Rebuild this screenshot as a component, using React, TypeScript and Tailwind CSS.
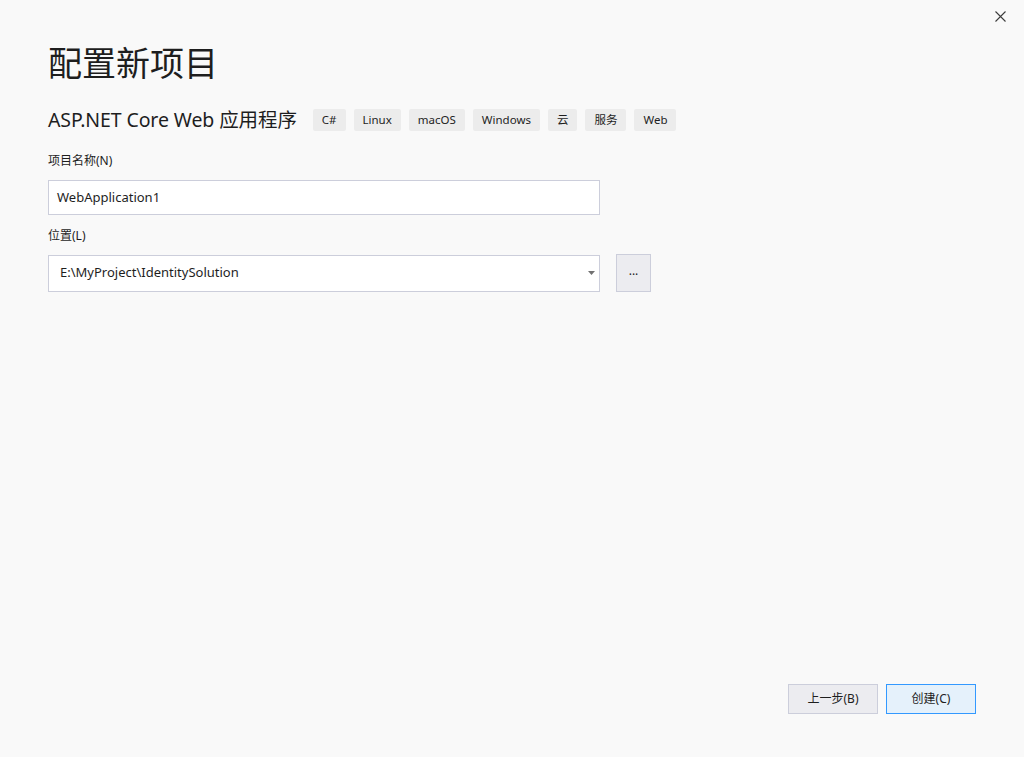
import React from 'react';

const tags = ['C#', 'Linux', 'macOS', 'Windows', '云', '服务', 'Web'];

const font = 'font-["Noto_Sans","Noto_Sans_CJK_SC",sans-serif]';

const App = () => {
  return (
    <div className={`relative flex h-[757px] w-[1024px] flex-col bg-[#f9f9f9] text-[#1e1e1e] ${font}`}>
      {/* Close button */}
      <button type="button" className="absolute right-[16px] top-[8px] flex h-[16px] w-[16px] items-center justify-center text-[#3c3c3c]">
        <svg width="11" height="11" viewBox="0 0 11 11" fill="none" stroke="currentColor" strokeWidth="1.1">
          <path d="M0.5 0.5 L10.5 10.5 M10.5 0.5 L0.5 10.5" />
        </svg>
      </button>

      <div className="flex flex-1 flex-col pl-[48px] pr-[48px] pt-[41px]">
        <h1 className="text-[34px] font-normal leading-[44px] text-[#1e1e1e]">配置新项目</h1>

        {/* Template + tags */}
        <div className="mt-[21px] flex h-[28px] items-center">
          <span className="text-[19.5px] leading-[28px] tracking-[-0.1px] text-[#1e1e1e]">ASP.NET Core Web 应用程序</span>
          <div className="ml-[16px] flex items-center gap-[8px]">
            {tags.map((tag) => (
              <span key={tag} className="flex h-[22px] items-center rounded-[2px] bg-[#ececec] px-[9px] text-[11.5px] text-[#1e1e1e]">
                {tag}
              </span>
            ))}
          </div>
        </div>

        {/* Project name */}
        <label className="mt-[18px] block text-[12px] leading-[18px] text-[#1e1e1e]">项目名称(N)</label>
        <div className="mt-[10px] flex h-[35px] w-[552px] items-center border border-[#cccedb] bg-white px-[8px] text-[13px] text-[#1e1e1e]">
          WebApplication1
        </div>

        {/* Location */}
        <label className="mt-[12px] block text-[12px] leading-[18px] text-[#1e1e1e]">位置(L)</label>
        <div className="mt-[9px] flex items-center gap-[16px]">
          <div className="flex h-[37px] w-[552px] items-center justify-between border border-[#cccedb] bg-white pl-[11px] pr-[3px] text-[13px] text-[#1e1e1e]">
            <span>E:\MyProject\IdentitySolution</span>
            <svg width="7" height="4" viewBox="0 0 7 4" className="mr-[1px] text-[#717171]">
              <path d="M0 0 L7 0 L3.5 4 Z" fill="currentColor" />
            </svg>
          </div>
          <button type="button" className="flex h-[38px] w-[35px] items-center justify-center border border-[#cccedb] bg-[#ececf0] pb-[4px] text-[12px] text-[#1e1e1e]">
            ...
          </button>
        </div>

        {/* Footer */}
        <div className="mb-[43px] mt-auto flex justify-end gap-[8px]">
          <button type="button" className="flex h-[30px] w-[90px] items-center justify-center border border-[#cccedb] bg-[#ececf0] text-[12px] text-[#1e1e1e]">
            上一步(B)
          </button>
          <button type="button" className="flex h-[30px] w-[90px] items-center justify-center border border-[#3399ff] bg-[#e5f1fb] text-[12px] text-[#1e1e1e]">
            创建(C)
          </button>
        </div>
      </div>
    </div>
  );
};

export default App;
